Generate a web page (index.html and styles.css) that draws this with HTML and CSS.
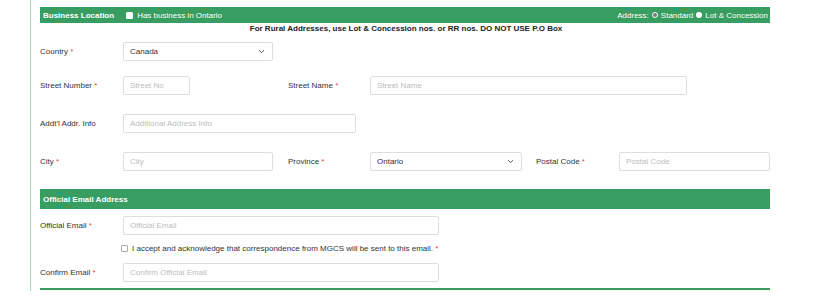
FILE: index.html
```html
<!DOCTYPE html>
<html>
<head>
<meta charset="utf-8">
<link rel="stylesheet" href="styles.css">
</head>
<body>
<div class="frame">
  <div class="bar bar-loc">
    <div class="bar-left">
      <span class="bar-title">Business Location</span>
      <span class="wcheck"></span>
      <span>Has business in Ontario</span>
    </div>
    <div class="bar-right">
      <span>Address:</span>
      <span class="radio on"></span><span>Standard</span>
      <span class="radio"></span><span>Lot &amp; Concession</span>
    </div>
  </div>
  <div class="notice">For Rural Addresses, use Lot &amp; Concession nos. or RR nos. DO NOT USE P.O Box</div>

  <div class="grid row-country">
    <label class="lbl">Country <span class="req">*</span></label>
    <div class="field select"><span>Canada</span><svg width="7" height="5" viewBox="0 0 7 5"><path d="M1 1.2 L3.5 3.6 L6 1.2" fill="none" stroke="#555" stroke-width="1"/></svg></div>
  </div>

  <div class="grid row-street">
    <label class="lbl">Street Number <span class="req">*</span></label>
    <div class="field ph w67">Street No</div>
    <span></span>
    <label class="lbl">Street Name <span class="req">*</span></label>
    <div class="field ph w317">Street Name</div>
  </div>

  <div class="grid row-addl">
    <label class="lbl">Addt'l Addr. Info</label>
    <div class="field ph w233">Additional Address Info</div>
  </div>

  <div class="grid row-city">
    <label class="lbl">City <span class="req">*</span></label>
    <div class="field ph">City</div>
    <span></span>
    <label class="lbl">Province <span class="req">*</span></label>
    <div class="field select"><span>Ontario</span><svg width="7" height="5" viewBox="0 0 7 5"><path d="M1 1.2 L3.5 3.6 L6 1.2" fill="none" stroke="#555" stroke-width="1"/></svg></div>
    <span></span>
    <label class="lbl">Postal Code <span class="req">*</span></label>
    <div class="field ph">Postal Code</div>
  </div>

  <div class="bar bar-email"><span class="bar-title">Official Email Address</span></div>

  <div class="grid row-email">
    <label class="lbl">Official Email <span class="req">*</span></label>
    <div class="field ph w316">Official Email</div>
  </div>

  <div class="accept">
    <span class="gcheck"></span>
    <span>I accept and acknowledge that correspondence from MGCS will be sent to this email. <span class="req">*</span></span>
  </div>

  <div class="grid row-confirm">
    <label class="lbl">Confirm Email <span class="req">*</span></label>
    <div class="field ph w316">Confirm Official Email</div>
  </div>

  <div class="bottom-line"></div>
</div>
</body>
</html>
```

FILE: styles.css
```css
html, body {
  margin: 0;
  padding: 0;
  background: #fff;
}
body {
  font-family: "Liberation Sans", Arial, sans-serif;
  font-size: 8px;
  color: #333;
  width: 837px;
  height: 297px;
  overflow: hidden;
}
.frame {
  margin-left: 30px;
  width: 730px;
  padding-left: 9px;
  padding-top: 7px;
  border-left: 1px solid #a6dbbe;
  height: 284px;
}
.bar {
  background: #379d60;
  color: #fff;
  display: flex;
  align-items: center;
  justify-content: space-between;
}
.bar-loc {
  height: 16px;
  padding: 0 2px 0 3px;
}
.bar-left, .bar-right {
  display: flex;
  align-items: center;
}
.bar-title {
  font-weight: bold;
}
.bar-left .bar-title {
  margin-right: 12px;
}
.wcheck {
  width: 7px;
  height: 7px;
  background: #fff;
  border-radius: 1.5px;
  margin-right: 4px;
}
.bar-right span { margin-left: 2px; }
.radio {
  width: 6px;
  height: 6px;
  border-radius: 50%;
  background: #fff;
  box-sizing: border-box;
  margin: 0 1px 0 3px !important;
}
.radio.on {
  border: 1.5px solid #fff;
  background: #777;
}
.notice {
  font-weight: bold;
  color: #222;
  text-align: center;
  height: 14px;
  line-height: 11px;
  padding-left: 2px;
}
.grid {
  display: grid;
  grid-template-columns: 83px 150px 15px 82px 152px 14px 83px 151px;
  align-items: center;
  height: 19px;
}
.row-country { margin-top: 5px; }
.row-street { margin-top: 15px; }
.row-addl { margin-top: 19px; }
.row-city { margin-top: 19px; }
.row-email { margin-top: 7px; }
.row-confirm { margin-top: 9px; }
.lbl {
  color: #333;
}
.req { color: #e8464b; }
.field {
  height: 19px;
  box-sizing: border-box;
  border: 1px solid #dedede;
  border-radius: 2px;
  padding: 0 6px;
  display: flex;
  align-items: center;
  background: #fff;
  white-space: nowrap;
  overflow: hidden;
}
.ph { color: #bdbdbd; }
.select {
  justify-content: space-between;
  color: #333;
  padding-right: 7px;
}
.w67 { width: 67px; }
.w233 { width: 233px; }
.w316 { width: 316px; grid-column: 2 / span 5; }
.w317 { width: 317px; grid-column: 5 / span 4; }
.bar-email {
  margin-top: 18px;
  height: 20px;
  padding-left: 3px;
}
.accept {
  display: flex;
  align-items: center;
  margin-top: 7px;
  margin-left: 81px;
  height: 12px;
}
.gcheck {
  width: 7px;
  height: 7px;
  box-sizing: border-box;
  border: 1px solid #aaa;
  border-radius: 1px;
  margin-right: 4px;
}
.bottom-line {
  margin-top: 6px;
  height: 2px;
  background: #3a9b61;
}
```
